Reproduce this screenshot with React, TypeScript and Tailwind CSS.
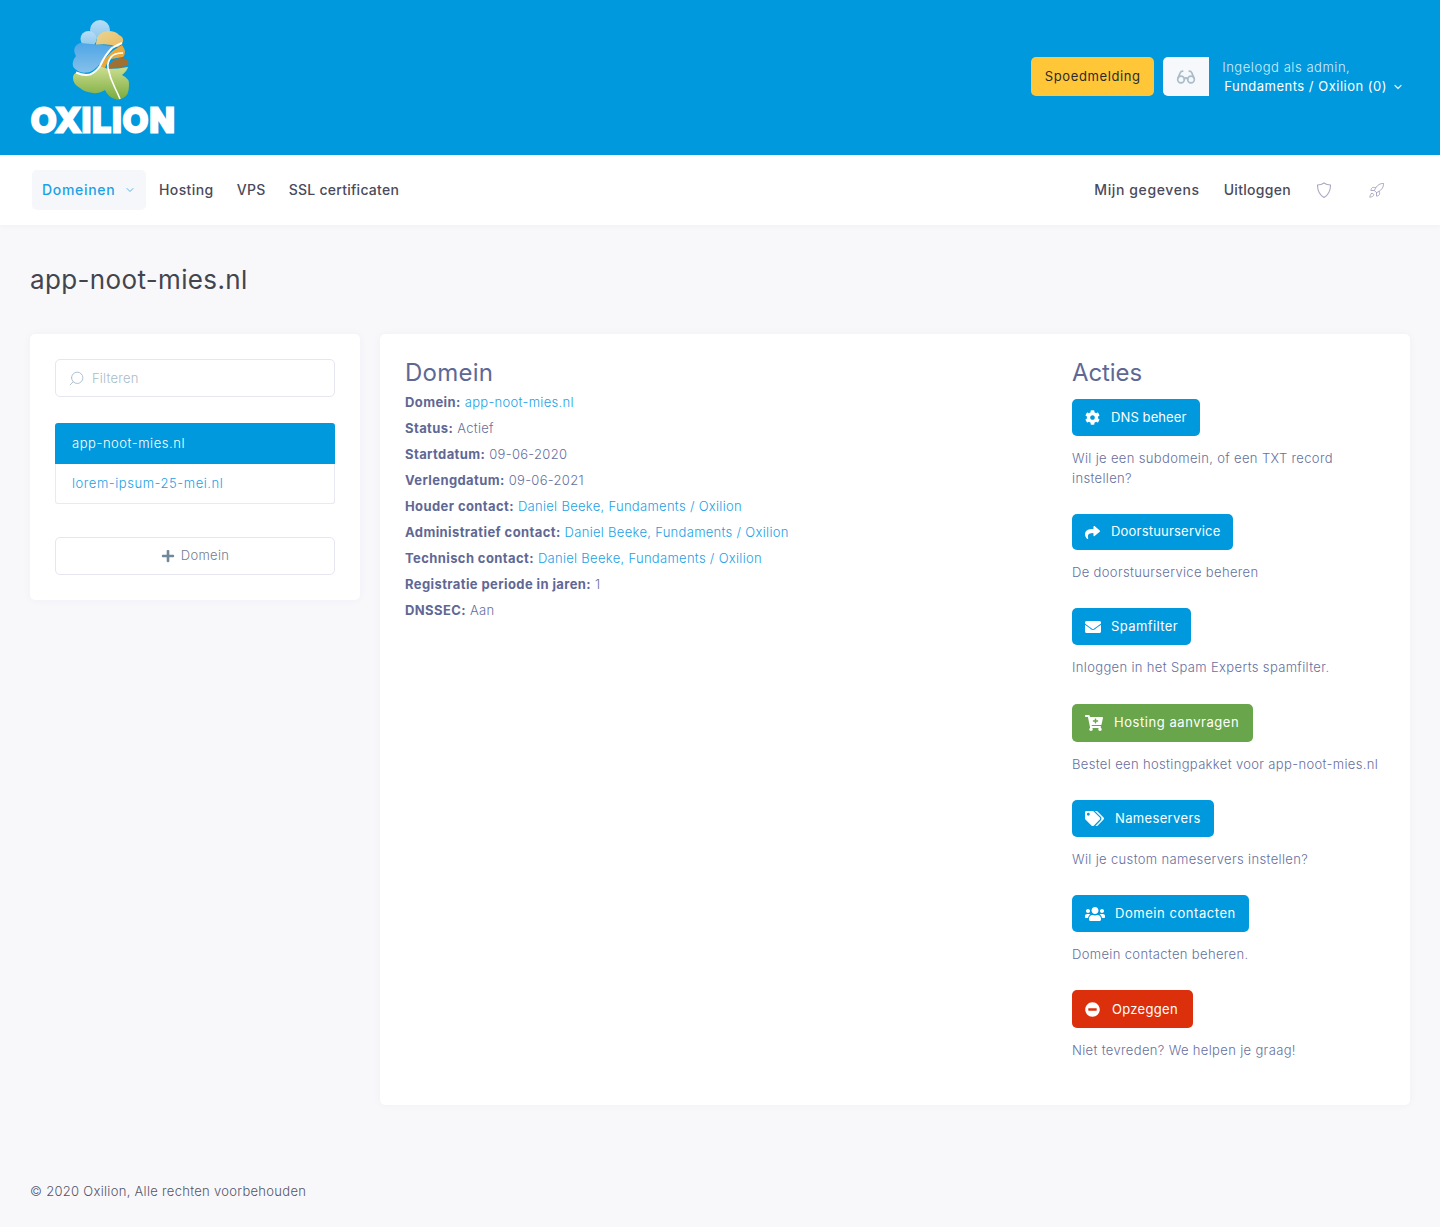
import React from 'react';
import { ChevronDown, Glasses, Rocket, Search } from 'lucide-react';
import { FaCartPlus, FaCog, FaEnvelope, FaMinusCircle, FaPlus, FaShare, FaTags, FaUsers } from 'react-icons/fa';

const Logo: React.FC = () => (
  <div className="flex w-[146px] flex-col">
    <svg width="62" height="84" viewBox="0 0 62 84" className="ml-[40px]">
      <defs>
        <linearGradient id="sky" x1="0" y1="0" x2="0" y2="1">
          <stop offset="0" stopColor="#b7def5" />
          <stop offset="1" stopColor="#8cc6ec" />
        </linearGradient>
        <linearGradient id="water" x1="0" y1="0" x2="0" y2="1">
          <stop offset="0" stopColor="#4ea6e6" />
          <stop offset="1" stopColor="#86c0ea" />
        </linearGradient>
        <linearGradient id="land" x1="0" y1="0" x2="0" y2="1">
          <stop offset="0" stopColor="#cfdf93" />
          <stop offset="1" stopColor="#79ab3c" />
        </linearGradient>
        <linearGradient id="sand" x1="0" y1="0" x2="1" y2="1">
          <stop offset="0" stopColor="#e6d596" />
          <stop offset="1" stopColor="#ecbb5e" />
        </linearGradient>
      </defs>
      <circle cx="30" cy="12" r="10" fill="url(#sky)" />
      <circle cx="18.5" cy="21" r="8" fill="url(#sky)" />
      <path d="M26 27Q26 14 38 13Q46 13 49 17Q54 19 53 24L48 29Q38 25 26 27Z" fill="url(#sand)" />
      <path d="M10 25L43 28Q42 33 34 40Q28 50 20 54Q12 56 8 53Q1 49 3 44Q4 40 6 38Q1 29 10 25Z" fill="url(#water)" />
      <path d="M30 48Q36 38 44 32Q50 28 52 27Q55 31 55 34Q55 37 53 39L41 41Q37 44 35 50Z" fill="#eba83a" />
      <path d="M43 43Q50 39 53 40Q60 42 58 47Q50 50 38 51Q39 46 43 43Z" fill="#a06f32" />
      <path d="M3 60Q3 56 6 55Q14 58 20 57Q26 54 30 48L38 51Q48 51 58 49Q57 53 52 57Q60 61 59 67Q59 78 53 80Q48 83 45 81Q38 79 35 72Q28 76 23 75Q14 74 10 70Q3 66 3 60Z" fill="url(#land)" />
      <path d="M6 54.5Q14 58 20 56.5Q26 54 30 48Q35 37 42 30Q47 27 52 25" fill="none" stroke="#fff" strokeWidth="2" />
      <path d="M53 35Q44 35 41 39Q37 45 38 50Q40 60 45 70Q48 76 50 81" fill="none" stroke="#fff" strokeWidth="1.6" />
    </svg>
    <span className="mt-[1px] ml-[1px] whitespace-nowrap text-[33px] leading-[34px] font-bold tracking-[1.3px] text-white [-webkit-text-stroke:3px_white]">
      OXILION
    </span>
  </div>
);

const Header: React.FC = () => (
  <header className="flex h-[155px] items-start justify-between bg-[#0099de] pl-[30px] pr-[36px] pt-[18px]">
    <Logo />
    <div className="mt-[39px] flex items-start">
      <button className="flex h-[39px] w-[123px] items-center justify-center rounded-[5px] bg-[#ffc737] text-[13px] tracking-[0.6px] text-[#2b2b2b]">
        Spoedmelding
      </button>
      <div className="ml-[9px] flex h-[39px] w-[46px] items-center justify-center rounded-l-[5px] bg-[#f6f8fb]">
        <Glasses size={20} strokeWidth={2} className="text-[#a9bcc9]" />
      </div>
      <div className="ml-[13px] pt-[1px] text-[13px] leading-[19px] font-light text-white">
        <div className="tracking-[0.55px] text-[#d5edfa]">Ingelogd als admin,</div>
        <div className="flex items-center pl-[2px] font-normal tracking-[0.5px]">
          Fundaments / Oxilion (0)
          <ChevronDown size={12} strokeWidth={2.5} className="ml-[5px] text-[#d5edfa]" />
        </div>
      </div>
    </div>
  </header>
);

const NavBar: React.FC = () => (
  <nav className="flex h-[70px] items-center justify-between bg-white pl-[32px] pr-[55px] text-[14px] font-medium tracking-[0.4px] text-[#4a4a5c] shadow-[0_1px_6px_rgba(60,60,100,0.04)]">
    <div className="flex items-center">
      <a className="flex h-[40px] w-[114px] items-center rounded-[5px] bg-[#f6f7fa] pb-[2px] pl-[10px] tracking-[0.7px] text-[#1ba1e6]">
        Domeinen
        <ChevronDown size={12} strokeWidth={1.5} className="ml-[9px] mt-[2px]" />
      </a>
      <a className="ml-[13px] pb-[2px]">Hosting</a>
      <a className="ml-[23px] pb-[2px]">VPS</a>
      <a className="ml-[23px] pb-[2px] tracking-[0.25px]">SSL certificaten</a>
    </div>
    <div className="flex items-center">
      <a className="pb-[2px] tracking-[0.6px]">Mijn gegevens</a>
      <a className="ml-[24px] pb-[2px] tracking-[0.3px]">Uitloggen</a>
      {/* shield with a peaked top, lucide's is flat */}
      <svg width="14" height="16" viewBox="0 0 14 16" fill="none" stroke="#a9a9c4" strokeWidth="1.1" className="ml-[26px]">
        <path d="M7 1C9 2.5 11 3 13.5 3C13.5 9 11.5 13 7 15.5C2.5 13 .5 9 .5 3C3 3 5 2.5 7 1Z" />
      </svg>
      <Rocket size={17} strokeWidth={1.4} className="ml-[37px] text-[#a9a9c4]" />
    </div>
  </nav>
);

const Sidebar: React.FC = () => (
  <aside className="w-[330px] self-start rounded-[5px] bg-white p-[25px] shadow-[0_0_8px_rgba(60,60,120,0.04)]">
    <div className="flex h-[38px] items-center rounded-[5px] border border-[#e6e6f0] pl-[12px] text-[13px] font-light text-[#a9bcc9]">
      <Search size={17} strokeWidth={1.3} className="-scale-x-100" />
      <span className="ml-[7px] pt-[2px]">Filteren</span>
    </div>
    <ul className="mt-[26px] text-[13px] font-light tracking-[0.55px]">
      <li className="flex h-[41px] items-center rounded-t-[3px] bg-[#0099de] pl-[17px] text-white">app-noot-mies.nl</li>
      <li className="flex h-[40px] items-center rounded-b-[3px] border border-t-0 border-[#e9e9f2] pl-[16px] text-[#1ba1e6]">
        lorem-ipsum-25-mei.nl
      </li>
    </ul>
    <button className="mt-[33px] flex h-[38px] w-full items-center justify-center rounded-[5px] border border-[#e6e6f0] text-[13px] font-light tracking-[0.3px] text-[#71808e]">
      <FaPlus size={14} className="mr-[6px] text-[#71889a]" />
      Domein
    </button>
  </aside>
);

const details: { label: string; value: string; link?: boolean }[] = [
  { label: 'Domein:', value: 'app-noot-mies.nl', link: true },
  { label: 'Status:', value: 'Actief' },
  { label: 'Startdatum:', value: '09-06-2020' },
  { label: 'Verlengdatum:', value: '09-06-2021' },
  { label: 'Houder contact:', value: 'Daniel Beeke, Fundaments / Oxilion', link: true },
  { label: 'Administratief contact:', value: 'Daniel Beeke, Fundaments / Oxilion', link: true },
  { label: 'Technisch contact:', value: 'Daniel Beeke, Fundaments / Oxilion', link: true },
  { label: 'Registratie periode in jaren:', value: '1' },
  { label: 'DNSSEC:', value: 'Aan' },
];

const actions = [
  { icon: <FaCog size={15} />, label: 'DNS beheer', text: 'Wil je een subdomein, of een TXT record instellen?', bg: 'bg-[#0099de]', size: 'h-[37px] w-[128px]', label2: 'ml-[11px] tracking-[0.1px]', mb: 'mb-[27px]' },
  { icon: <FaShare size={15} />, label: 'Doorstuurservice', text: 'De doorstuurservice beheren', bg: 'bg-[#0099de]', size: 'h-[36px] w-[161px]', label2: 'ml-[11px] tracking-[0.2px]', mb: 'mb-[26.5px]' },
  { icon: <FaEnvelope size={16} />, label: 'Spamfilter', text: 'Inloggen in het Spam Experts spamfilter.', bg: 'bg-[#0099de]', size: 'h-[37px] w-[119px]', label2: 'ml-[10px] tracking-[0.4px]', mb: 'mb-[27.5px]' },
  { icon: <FaCartPlus size={18} />, label: 'Hosting aanvragen', text: 'Bestel een hostingpakket voor app-noot-mies.nl', bg: 'bg-[#69a54a]', size: 'h-[38px] w-[181px]', label2: 'ml-[11px] tracking-[0.55px]', mb: 'mb-[26.5px]' },
  { icon: <FaTags size={19} />, label: 'Nameservers', text: 'Wil je custom nameservers instellen?', bg: 'bg-[#0099de]', size: 'h-[37px] w-[142px]', label2: 'ml-[11px] tracking-[0.35px]', mb: 'mb-[26.5px]' },
  { icon: <FaUsers size={20} />, label: 'Domein contacten', text: 'Domein contacten beheren.', bg: 'bg-[#0099de]', size: 'h-[37px] w-[177px]', label2: 'ml-[10px] tracking-[0.55px]', mb: 'mb-[26.5px]' },
  { icon: <FaMinusCircle size={15} />, label: 'Opzeggen', text: 'Niet tevreden? We helpen je graag!', bg: 'bg-[#dc300d]', size: 'h-[38px] w-[121px]', label2: 'ml-[12px] pt-[2px] tracking-[0.3px]', mb: 'mb-[26.5px]' },
];

const Main: React.FC = () => (
  <main className="ml-[20px] flex h-[771px] w-[1030px] rounded-[5px] bg-white pl-[25px] pt-[26px] shadow-[0_0_8px_rgba(60,60,120,0.04)]">
    <section className="w-[667px]">
      <h2 className="text-[24px] leading-[26px] tracking-[0.25px] text-[#5f6895]">Domein</h2>
      <div className="mt-[3px] text-[13px] leading-[26px] font-light tracking-[0.3px] text-[#666f9e]">
        {details.map((row) => (
          <div key={row.label}>
            <b className="font-bold tracking-[0.4px] text-[#5f6895]">{row.label}</b>{' '}
            <span className={row.link ? 'text-[#1ba1e6]' : ''}>{row.value}</span>
          </div>
        ))}
      </div>
    </section>
    <section className="w-[316px]">
      <h2 className="text-[24px] leading-[26px] tracking-[-0.1px] text-[#5f6895]">Acties</h2>
      <div className="mt-[13px]">
        {actions.map((a) => (
          <div key={a.label} className={a.mb}>
            <button className={`flex items-center rounded-[5px] pl-[13px] text-[13px] text-white ${a.bg} ${a.size}`}>
              {a.icon}
              <span className={a.label2}>{a.label}</span>
            </button>
            <p className="mt-[12px] pt-[1px] -mb-[1px] text-[13px] leading-[19.5px] font-light tracking-[0.35px] text-[#666f9e]">{a.text}</p>
          </div>
        ))}
      </div>
    </section>
  </main>
);

const App: React.FC = () => (
  <div className="min-h-[1227px] bg-[#f8f8fb] font-[Inter,sans-serif] tracking-[0.2px]">
    <Header />
    <NavBar />
    <div className="px-[30px]">
      <h1 className="mt-[37px] text-[26px] leading-[36px] tracking-[0.35px] text-[#44444f]">app-noot-mies.nl</h1>
      <div className="mt-[36px] flex">
        <Sidebar />
        <Main />
      </div>
      <footer className="mt-[76px] text-[13px] leading-[20px] font-light tracking-[0.3px] text-[#55556a]">
        © 2020 Oxilion, Alle rechten voorbehouden
      </footer>
    </div>
  </div>
);

export default App;
